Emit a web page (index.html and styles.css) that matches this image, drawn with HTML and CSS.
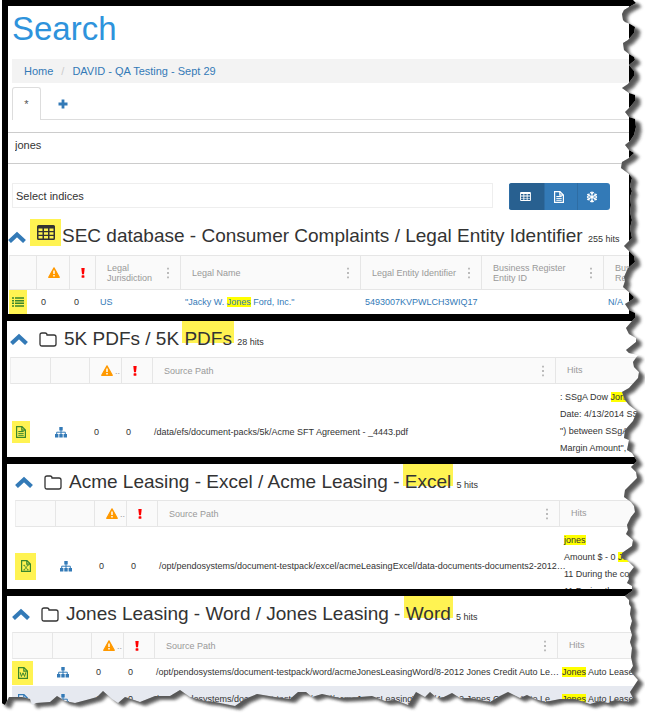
FILE: index.html
```
<!DOCTYPE html>
<html lang="en">
<head>
<meta charset="utf-8">
<title>Search</title>
<link rel="stylesheet" href="styles.css">
</head>
<body>
<svg class="sprite" aria-hidden="true">
  <symbol id="chevron" viewBox="0 0 18 12"><path d="M1.500 10.500 9 3.500l7.500 7" fill="none" stroke="currentColor" stroke-width="4.200"/></symbol>
  <symbol id="grid" viewBox="0 0 18 15"><path fill="currentColor" fill-rule="evenodd" d="M1.500 0h15A1.500 1.500 0 0 1 18 1.500v12a1.500 1.500 0 0 1-1.500 1.500h-15A1.500 1.500 0 0 1 0 13.500v-12A1.500 1.500 0 0 1 1.500 0zM1.500 3.500v2.500h4V3.500zM7 3.500v2.500h4V3.500zM12.500 3.500v2.500h4V3.500zM1.500 7.300v2.500h4V7.300zM7 7.300v2.500h4V7.300zM12.500 7.300v2.500h4V7.300zM1.500 11v2.500h4V11zM7 11v2.500h4V11zM12.500 11v2.500h4V11z"/></symbol>
  <symbol id="folder" viewBox="0 0 18 15"><path d="M1 3q0-2 2-2h3q2 0 2 2h7q2 0 2 2v7q0 2-2 2H3q-2 0-2-2z" fill="none" stroke="currentColor" stroke-width="1.300"/></symbol>
  <symbol id="warn" viewBox="0 0 12 11"><path d="M6 .8 11.300 10.300H.7z" fill="#f90" stroke="#f90" stroke-width="1.200" stroke-linejoin="round"/><path d="M6 3.400v3.700M6 8.100v1.500" stroke="#fff" stroke-width="1.500"/></symbol>
  <symbol id="bang" viewBox="0 0 4 10"><path d="M.3 0h3.400L3 6.200H1z" fill="#f00"/><rect x=".6" y="7.200" width="2.800" height="2.600" rx=".5" fill="#f00"/></symbol>
  <symbol id="list" viewBox="0 0 12 10"><path d="M0 1h2M0 3.700h2M0 6.300h2M0 9h2M3 1h9M3 3.700h9M3 6.300h9M3 9h9" stroke="currentColor" stroke-width="1.500"/></symbol>
  <symbol id="file" viewBox="0 0 10 12"><path d="M.6.600h5.400L9.400 4v7.400H.6zM5.800.600V4.200h3.600" fill="none" stroke="currentColor" stroke-width="1.200"/></symbol>
  <symbol id="doc" viewBox="0 0 10 12"><use href="#file"/><path d="M2.300 5.500h5.400M2.300 7.400h5.400M2.300 9.300h5.400" stroke="currentColor"/></symbol>
  <symbol id="excel" viewBox="0 0 10 12"><use href="#file"/><path d="M3 5.300l4 4.600M7 5.300l-4 4.600M2.400 5.300h1.800M5.800 5.300h1.800M2.400 9.900h1.800M5.800 9.900h1.800" stroke="currentColor" stroke-width=".8"/></symbol>
  <symbol id="word" viewBox="0 0 10 12"><use href="#file"/><path d="M2.200 5.300l1.200 4.200L5 5.800l1.600 3.700 1.200-4.200" fill="none" stroke="currentColor"/></symbol>
  <symbol id="tree" viewBox="0 0 12 11"><path d="M4.300 0h3.400v3.400H4.300zM0 7h3.400v3.400H0zM4.300 7h3.400v3.400H4.300zM8.600 7H12v3.400H8.600z" fill="currentColor"/><path d="M6 3v4M1.700 7.500V5.200h8.600v2.300" fill="none" stroke="currentColor"/></symbol>
  <symbol id="dots" viewBox="0 0 2 11"><path d="M0 0h2v2H0zM0 4.500h2v2H0zM0 9h2v2H0z" fill="#bbb"/></symbol>
  <symbol id="flake" viewBox="0 0 12 12"><path d="M6 .5v11M1.200 3.200l9.600 5.600M1.200 8.800l9.600-5.600M4.300 1.200 6 2.900l1.700-1.700M4.300 10.800 6 9.100l1.700 1.700M1 5.500l2.300-.700-.500-2.300M11 5.500l-2.300-.700.500-2.300M1 6.500l2.300.700-.500 2.300M11 6.500l-2.300.700.500 2.300" fill="none" stroke="currentColor" stroke-width="1.200"/></symbol>
  <symbol id="plus" viewBox="0 0 10 10"><path d="M5 .5v9M.5 5h9" stroke="currentColor" stroke-width="2.800"/></symbol>
</svg>

<main class="frame">
  <section class="panel panel-search">
    <h1>Search</h1>
    <nav class="crumbs"><a href="#">Home</a><span>/</span><a href="#">DAVID - QA Testing - Sept 29</a></nav>
    <div class="tabs">
      <button class="tab active">*</button>
      <button class="tab add" aria-label="Add tab"><svg width="10" height="10"><use href="#plus"/></svg></button>
    </div>
    <input class="query" aria-label="Query" value="jones">
    <div class="tools">
      <input class="indices" aria-label="Indices" placeholder="Select indices">
      <div class="views">
        <button class="on" aria-label="Table view"><svg width="11" height="9"><use href="#grid"/></svg></button>
        <button aria-label="Document view"><svg width="10" height="12"><use href="#doc"/></svg></button>
        <button aria-label="Cluster view"><svg width="12" height="12"><use href="#flake"/></svg></button>
      </div>
    </div>
    <header class="title">
      <svg class="chev" width="18" height="12"><use href="#chevron"/></svg>
      <span class="hl kind"><svg width="18" height="15"><use href="#grid"/></svg></span>
      <h2>SEC database - Consumer Complaints / Legal Entity Identifier <small>255 hits</small></h2>
    </header>
    <table class="entities">
      <colgroup><col class="c27"><col class="c33"><col class="c26"><col class="c85"><col><col class="c121"><col class="c122"><col class="c26"></colgroup>
      <thead><tr>
        <th></th>
        <th><svg width="12" height="11"><use href="#warn"/></svg></th>
        <th><svg width="4" height="10"><use href="#bang"/></svg></th>
        <th><div>Legal<br>Jurisdiction<svg width="2" height="11"><use href="#dots"/></svg></div></th>
        <th><div>Legal Name<svg width="2" height="11"><use href="#dots"/></svg></div></th>
        <th><div>Legal Entity Identifier<svg width="2" height="11"><use href="#dots"/></svg></div></th>
        <th><div>Business Register<br>Entity ID<svg width="2" height="11"><use href="#dots"/></svg></div></th>
        <th><div>Bus<br>Re</div></th>
      </tr></thead>
      <tbody><tr>
        <td class="mark"><span class="hl tag"><svg width="12" height="10"><use href="#list"/></svg></span></td>
        <td>0</td><td>0</td>
        <td><a href="#">US</a></td>
        <td><a href="#">"Jacky W. <mark>Jones</mark> Ford, Inc."</a></td>
        <td><a href="#">5493007KVPWLCH3WIQ17</a></td>
        <td></td>
        <td><a href="#">N/A</a></td>
      </tr></tbody>
    </table>
  </section>

  <section class="panel panel-pdf">
    <header class="title">
      <svg class="chev" width="18" height="12"><use href="#chevron"/></svg>
      <span class="kind"><svg width="18" height="15"><use href="#folder"/></svg></span>
      <h2>5K PDFs / 5K <span class="pen">PDFs</span> <small>28 hits</small></h2>
    </header>
    <div class="clip">
      <table>
        <colgroup><col class="c40"><col class="c39"><col class="c32"><col class="c31"><col><col class="c90"></colgroup>
        <thead><tr>
          <th></th><th></th>
          <th class="more"><svg width="12" height="11"><use href="#warn"/></svg><i>..</i></th>
          <th><svg width="4" height="10"><use href="#bang"/></svg></th>
          <th><div>Source Path<svg width="2" height="11"><use href="#dots"/></svg></div></th>
          <th>Hits</th>
        </tr></thead>
        <tbody><tr class="tall">
          <td class="mark"><span class="hl tag"><svg width="10" height="12"><use href="#doc"/></svg></span></td>
          <td><svg class="tree" width="12" height="11"><use href="#tree"/></svg></td>
          <td>0</td><td>0</td>
          <td class="path">/data/efs/document-packs/5k/Acme SFT Agreement - _4443.pdf</td>
          <td class="hits">: SSgA Dow <mark>Jones</mark><br>Date: 4/13/2014 SSgA<br>") between SSgA<br>Margin Amount", with</td>
        </tr></tbody>
      </table>
    </div>
  </section>

  <section class="panel panel-excel">
    <header class="title">
      <svg class="chev" width="18" height="12"><use href="#chevron"/></svg>
      <span class="kind"><svg width="18" height="15"><use href="#folder"/></svg></span>
      <h2>Acme Leasing - Excel / Acme Leasing - <span class="pen">Excel</span> <small>5 hits</small></h2>
    </header>
    <div class="clip">
      <table>
        <colgroup><col class="c40"><col class="c39"><col class="c32"><col class="c31"><col><col class="c86"></colgroup>
        <thead><tr>
          <th></th><th></th>
          <th class="more"><svg width="12" height="11"><use href="#warn"/></svg><i>..</i></th>
          <th><svg width="4" height="10"><use href="#bang"/></svg></th>
          <th><div>Source Path<svg width="2" height="11"><use href="#dots"/></svg></div></th>
          <th>Hits</th>
        </tr></thead>
        <tbody><tr>
          <td class="mark"><span class="hl tag"><svg width="10" height="12"><use href="#excel"/></svg></span></td>
          <td><svg class="tree" width="12" height="11"><use href="#tree"/></svg></td>
          <td>0</td><td>0</td>
          <td class="path">/opt/pendosystems/document-testpack/excel/acmeLeasingExcel/data-documents-documents2-2012…</td>
          <td class="hits"><mark>jones</mark><br>Amount $ - 0 <mark>Jones</mark><br>11 During the course<br>11 During the</td>
        </tr></tbody>
      </table>
    </div>
  </section>

  <section class="panel panel-word">
    <header class="title">
      <svg class="chev" width="18" height="12"><use href="#chevron"/></svg>
      <span class="kind"><svg width="18" height="15"><use href="#folder"/></svg></span>
      <h2>Jones Leasing - Word / Jones Leasing - <span class="pen">Word</span> <small>5 hits</small></h2>
    </header>
    <table>
      <colgroup><col class="c40"><col class="c39"><col class="c32"><col class="c31"><col><col class="c88"></colgroup>
      <thead><tr>
        <th></th><th></th>
        <th class="more"><svg width="12" height="11"><use href="#warn"/></svg><i>..</i></th>
        <th><svg width="4" height="10"><use href="#bang"/></svg></th>
        <th><div>Source Path<svg width="2" height="11"><use href="#dots"/></svg></div></th>
        <th>Hits</th>
      </tr></thead>
      <tbody>
        <tr>
          <td class="mark"><span class="hl tag"><svg width="10" height="12"><use href="#word"/></svg></span></td>
          <td><svg class="tree" width="12" height="11"><use href="#tree"/></svg></td>
          <td>0</td><td>0</td>
          <td class="path">/opt/pendosystems/document-testpack/word/acmeJonesLeasingWord/8-2012 Jones Credit Auto Le…</td>
          <td><mark>Jones</mark> Auto Lease</td>
        </tr>
        <tr class="alt">
          <td class="mark"><span class="tag"><svg width="10" height="12"><use href="#word"/></svg></span></td>
          <td><svg class="tree" width="12" height="11"><use href="#tree"/></svg></td>
          <td>0</td><td>0</td>
          <td class="path">/opt/pendosystems/document-testpack/word/acmeJonesLeasingWord/4-2012 Jones Credit Auto Le…</td>
          <td><mark>Jones</mark> Auto Lease,</td>
        </tr>
      </tbody>
    </table>
  </section>

  <svg class="tear" viewBox="0 0 645 714" preserveAspectRatio="none" aria-hidden="true">
    <defs>
      <path id="sheet" d="M0 0H633L636 3 629 7 624 10 622 14 623 20 625 22 630 24 635 27 634 33 628 40 623 43 624 50 629 54 634 57 635 60 629 65 634 71 634 76 628 84 622 88 629 93 635 95 635 101 630 107 625 112 629 117 635 119 636 127 634 135 630 141 625 145 629 150 634 153 629 158 622 162 621 168 629 174 632 178 630 186 632 191 630 197 631 205 630 212 632 220 630 228 632 238 624 246 629 251 634 256 635 262 628 268 624 277 625 281 623 287 630 293 634 297 633 299 625 304 629 310 635 313 635 318 632 321 626 328 629 334 636 338 636 342 626 350 629 353 638 355 633 362 634 367 639 372 638 378 629 388 622 392 625 400 629 405 637 411 633 421 625 430 624 438 629 440 627 450 632 453 637 461 631 467 636 472 637 478 631 484 625 490 624 497 631 502 634 506 635 512 631 517 627 525 628 530 626 534 633 540 632 546 622 553 621 558 627 560 634 567 628 575 629 579 627 583 632 586 632 591 625 596 629 600 629 604 631 607 630 614 632 621 630 628 632 635 630 642 632 648 631 657 633 666 630 671 638 680 632 689 630 692 633 698 628 702 615 700 608 703 600 701 590 704 575 699 560 699 545 702 535 699 527 695 520 698 508 692 500 696 490 702 470 698 460 698 452 693 444 697 437 698 430 692 425 697 416 692 408 705 395 700 385 701 372 696 360 697 340 698 322 694 312 697 306 692 298 692 290 699 275 697 257 694 245 699 235 706 215 702 205 701 190 697 180 690 170 696 155 696 140 702 131 699 125 697 118 703 112 699 103 691 97 697 90 699 75 703 65 701 57 696 50 702 36 703 32 705 30 699 22 697 9 697 5 705 0 702Z"/>
      <clipPath id="outside"><path clip-rule="evenodd" d="M0 0H645V714H0ZM0 0H633L636 3 629 7 624 10 622 14 623 20 625 22 630 24 635 27 634 33 628 40 623 43 624 50 629 54 634 57 635 60 629 65 634 71 634 76 628 84 622 88 629 93 635 95 635 101 630 107 625 112 629 117 635 119 636 127 634 135 630 141 625 145 629 150 634 153 629 158 622 162 621 168 629 174 632 178 630 186 632 191 630 197 631 205 630 212 632 220 630 228 632 238 624 246 629 251 634 256 635 262 628 268 624 277 625 281 623 287 630 293 634 297 633 299 625 304 629 310 635 313 635 318 632 321 626 328 629 334 636 338 636 342 626 350 629 353 638 355 633 362 634 367 639 372 638 378 629 388 622 392 625 400 629 405 637 411 633 421 625 430 624 438 629 440 627 450 632 453 637 461 631 467 636 472 637 478 631 484 625 490 624 497 631 502 634 506 635 512 631 517 627 525 628 530 626 534 633 540 632 546 622 553 621 558 627 560 634 567 628 575 629 579 627 583 632 586 632 591 625 596 629 600 629 604 631 607 630 614 632 621 630 628 632 635 630 642 632 648 631 657 633 666 630 671 638 680 632 689 630 692 633 698 628 702 615 700 608 703 600 701 590 704 575 699 560 699 545 702 535 699 527 695 520 698 508 692 500 696 490 702 470 698 460 698 452 693 444 697 437 698 430 692 425 697 416 692 408 705 395 700 385 701 372 696 360 697 340 698 322 694 312 697 306 692 298 692 290 699 275 697 257 694 245 699 235 706 215 702 205 701 190 697 180 690 170 696 155 696 140 702 131 699 125 697 118 703 112 699 103 691 97 697 90 699 75 703 65 701 57 696 50 702 36 703 32 705 30 699 22 697 9 697 5 705 0 702Z"/></clipPath>
      <filter id="soft" x="-5%" y="-5%" width="110%" height="110%"><feGaussianBlur stdDeviation="1.500"/></filter>
    </defs>
    <g clip-path="url(#outside)">
      <rect width="645" height="714" fill="#fff"/>
      <use href="#sheet" x="6" y="4" fill="#333" opacity=".5" filter="url(#soft)"/>
      <use href="#sheet" x="4" y="3" fill="#222" opacity=".55" filter="url(#soft)"/>
    </g>
  </svg>
</main>
</body>
</html>
```
FILE: styles.css
```
* { box-sizing: border-box; }

body {
  margin: 0;
  background: #fff;
  color: #333;
  font: 11px/16px "Liberation Sans", Arial, sans-serif;
}

.sprite { position: absolute; width: 0; height: 0; }
svg { display: block; flex: none; }
a { color: #337ab7; text-decoration: none; }
button { border: 0; margin: 0; padding: 0; background: none; color: #337ab7; font: inherit; cursor: pointer; }

.frame {
  position: relative;
  min-height: 100vh;
  overflow: hidden;
  padding-top: 6px;
  background: #000;
  border-left: 2px solid #fff;
}

.tear {
  position: absolute;
  top: 0;
  left: -2px;
  width: calc(100% + 2px);
  height: 100%;
  pointer-events: none;
}

.panel { background: #fff; overflow: hidden; margin: 0 0 7px 5px; }
.panel-search { margin: 0 16px 7px 6px; }

h1 {
  margin: 0;
  padding: 4px 4px 11px;
  color: #2e93dc;
  font-size: 33px;
  font-weight: 400;
  line-height: 38px;
}

.crumbs {
  display: flex;
  gap: 8px;
  margin-left: 4px;
  padding: 4px 12px;
  background: #f3f3f3;
}
.crumbs span { color: #ccc; }

.tabs {
  display: flex;
  height: 33px;
  margin: 4px 0 12px 4px;
  border-bottom: 1px solid #ddd;
}
.tab { height: 33px; width: 29px; color: #555; }
.tab.active {
  background: #fff;
  border: 1px solid #ddd;
  border-bottom: 0;
  border-radius: 3px 3px 0 0;
}
.tab.add { display: grid; place-content: center; width: 43px; color: #337ab7; }

.query {
  display: block;
  width: 100%;
  height: 32px;
  padding: 0 7px 6px;
  border: 1px solid #ccc;
  border-width: 1px 0;
  color: #333;
  font: inherit;
}

.tools { display: flex; align-items: flex-start; gap: 16px; margin: 19px 19px 0 4px; }
.indices {
  flex: 1;
  min-width: 0;
  height: 25px;
  padding: 0 3px;
  border: 1px solid #eee;
  font: inherit;
}
.indices::placeholder { color: #333; opacity: 1; }

.views { display: flex; border-radius: 3px; overflow: hidden; background: #337ab7; }
.views button {
  display: grid;
  place-content: center;
  width: 33px;
  height: 27px;
  padding-right: 4px;
  color: #fff;
  border-left: 1px solid #2e6da4;
}
.views button.on { width: 35px; background: #286090; }

.title { display: flex; align-items: center; height: 36px; white-space: nowrap; }
.chev { color: #337ab7; }
.kind { display: grid; place-content: center; width: 31px; height: 27px; margin: 0 1px 0 4px; }
h2 { margin: 2px 0 0; font-size: 19px; font-weight: 400; line-height: 24px; }
h2 small { font-size: 9px; }
.hl { background: #fff352; }
.pen {
  margin: 0 -2px;
  padding: 8px 2px 0;
  background: linear-gradient(#fff352, #fff352) no-repeat 0 0 / 100% calc(100% - 6px);
}
mark { background: #ff0; color: inherit; }

.panel-search .title { margin-top: 4px; height: 41px; padding-bottom: 5px; }
.panel-search h2, .panel-search .chev { margin-top: 10px; }
.panel-pdf .title { padding-left: 3px; }
.panel-excel .title { padding-left: 8px; }
.panel-word .title { padding-left: 5px; }

table {
  width: 100%;
  table-layout: fixed;
  border-collapse: separate;
  border-spacing: 0;
  font-size: 9px;
  line-height: 17px;
}
th {
  height: 27px;
  padding: 0 11px;
  overflow: hidden;
  background: #fafafa;
  border: 1px solid #e6e6e6;
  border-width: 1px 0 1px 1px;
  color: #999;
  font-weight: 400;
  text-align: left;
  white-space: nowrap;
}
th:first-child { border-left-color: #eee; }
th div { position: relative; line-height: 10px; }
th div svg { position: absolute; top: 50%; right: 0; transform: translateY(-50%); }
th i { font-style: normal; line-height: 10px; }
th.more { padding-right: 0; }
.more svg, .more i { display: inline-block; vertical-align: middle; }
.more i { margin-left: 2px; }
td { height: 27px; padding: 0 0 0 5px; overflow: hidden; white-space: nowrap; }
td.mark { padding-left: 0; }
td.path { padding-left: 2px; overflow: visible; }

.entities { margin-left: 1px; width: calc(100% - 1px); }
.entities th { height: 35px; }
.entities td { height: 24px; }
.entities th:last-child { padding-right: 0; }

.tag { display: grid; place-content: center; width: 18px; height: 24px; color: #3b872d; }
.tree { color: #337ab7; }
.hits { padding-top: 5px; padding-bottom: 5px; vertical-align: top; }
.tall td { height: 96px; }
.alt { background: #e6e9f0; }
.alt .tag { color: #337ab7; }

.panel-pdf table { margin-left: 3px; width: calc(100% - 3px); }
.panel-excel table { margin-left: 8px; width: calc(100% - 8px); }
.panel-word table { margin-left: 5px; width: calc(100% - 5px); }
.panel-pdf .tag { margin-left: 2px; height: 22px; }
.panel-excel .tag { width: 21px; height: 27px; }
.panel-word .tag { width: 21px; }
.clip { overflow: hidden; }
.panel-pdf .clip { height: 100px; }
.panel-excel .clip { height: 89px; }
.panel-word { margin-bottom: 0; }

.c26 { width: 26px; }
.c27 { width: 27px; }
.c31 { width: 31px; }
.c32 { width: 32px; }
.c33 { width: 33px; }
.c39 { width: 39px; }
.c40 { width: 40px; }
.c85 { width: 85px; }
.c86 { width: 86px; }
.c88 { width: 88px; }
.c90 { width: 90px; }
.c121 { width: 121px; }
.c122 { width: 122px; }
```
